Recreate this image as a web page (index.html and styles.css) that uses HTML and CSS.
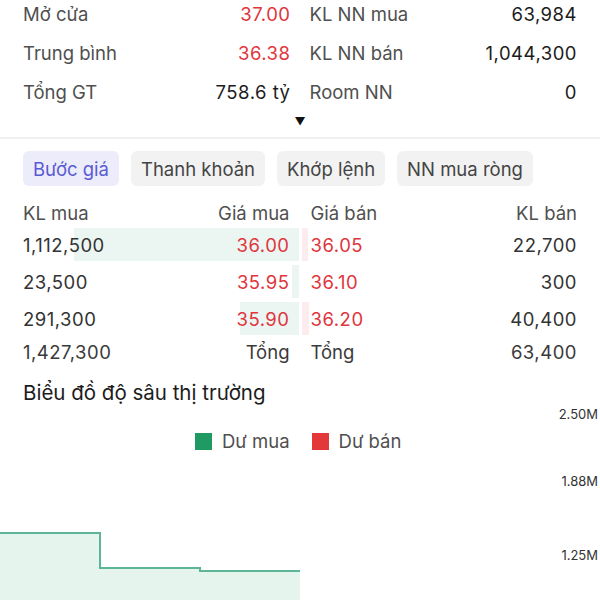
FILE: index.html
```html
<!DOCTYPE html>
<html lang="vi">
<head>
    <meta charset="UTF-8">
    <meta name="viewport" content="width=device-width, initial-scale=1.0">
    <title>Chi tiết cổ phiếu</title>
    <link rel="stylesheet" href="styles.css">
</head>
<body>
    <section class="stats">
        <div class="stat-row"><span class="label">Mở cửa</span><span class="value red">37.00</span></div>
        <div class="stat-row"><span class="label">KL NN mua</span><span class="value">63,984</span></div>
        <div class="stat-row"><span class="label">Trung bình</span><span class="value red">36.38</span></div>
        <div class="stat-row"><span class="label">KL NN bán</span><span class="value">1,044,300</span></div>
        <div class="stat-row"><span class="label">Tổng GT</span><span class="value">758.6 tỷ</span></div>
        <div class="stat-row"><span class="label">Room NN</span><span class="value">0</span></div>
    </section>
    <div class="expand">&#9660;</div>
    <hr class="divider">

    <nav class="tabs">
        <button class="tab active">Bước giá</button>
        <button class="tab">Thanh khoản</button>
        <button class="tab">Khớp lệnh</button>
        <button class="tab">NN mua ròng</button>
    </nav>

    <section class="book">
        <div class="book-row head">
            <div class="side buy"><span>KL mua</span><span>Giá mua</span></div>
            <div class="side sell"><span>Giá bán</span><span>KL bán</span></div>
        </div>
        <div class="book-row">
            <div class="side buy"><i class="bar" style="width: 81.5%"></i><span class="num">1,112,500</span><span class="num red">36.00</span></div>
            <div class="side sell"><i class="bar" style="width: 2.2%"></i><span class="num red">36.05</span><span class="num">22,700</span></div>
        </div>
        <div class="book-row">
            <div class="side buy"><i class="bar" style="width: 2.2%"></i><span class="num">23,500</span><span class="num red">35.95</span></div>
            <div class="side sell"><i class="bar" style="width: 0%"></i><span class="num red">36.10</span><span class="num">300</span></div>
        </div>
        <div class="book-row">
            <div class="side buy"><i class="bar" style="width: 21.3%"></i><span class="num">291,300</span><span class="num red">35.90</span></div>
            <div class="side sell"><i class="bar" style="width: 2.6%"></i><span class="num red">36.20</span><span class="num">40,400</span></div>
        </div>
        <div class="book-row total">
            <div class="side buy"><span class="num">1,427,300</span><span>Tổng</span></div>
            <div class="side sell"><span>Tổng</span><span class="num">63,400</span></div>
        </div>
    </section>

    <h2 class="chart-title">Biểu đồ độ sâu thị trường</h2>
    <div class="depth-chart">
        <svg class="plot" width="600" height="200" viewBox="0 0 600 200">
            <path d="M0 126 H100 V161 H200 V164 H300 V200 H0 Z" fill="#e6f4ee"/>
            <path d="M0 126 H100 V161 H200 V164 H300" fill="none" stroke="#5db597" stroke-width="2"/>
        </svg>
        <div class="legend">
            <span class="key"><i class="swatch green"></i>Dư mua</span>
            <span class="key"><i class="swatch redbox"></i>Dư bán</span>
        </div>
        <span class="tick" style="top: 7px">2.50M</span>
        <span class="tick" style="top: 74px">1.88M</span>
        <span class="tick" style="top: 148px">1.25M</span>
    </div>
</body>
</html>
```

FILE: styles.css
```css
body { margin: 0; padding: 0 23px; font-family: Inter, "Noto Sans", sans-serif; font-size: 18.5px; color: #1c1c1c; background: #fff; overflow: hidden; }
.red { color: #e0353d; }
.value, .num { letter-spacing: 0.5px; }

.stats { display: grid; grid-template-columns: 1fr 1fr; column-gap: 19px; margin-top: -6px; }
.stat-row { display: flex; justify-content: space-between; align-items: center; height: 39px; }
.label { color: #4f4f4f; }

.expand { text-align: center; font-size: 11px; line-height: 18px; margin-top: 1px; color: #111; }
.divider { border: none; border-top: 2px solid #f0f0f0; margin: 7px -23px 0; }

.tabs { display: flex; gap: 12px; margin-top: 12px; }
.tab { font: inherit; font-size: 18.5px; border: none; border-radius: 6px; background: #f2f2f2; color: #444; padding: 0 10px; height: 35px; }
.tab.active { background: #ececfb; color: #5a5ad4; }

.book { margin-top: 12px; color: #333; }
.book-row { display: grid; grid-template-columns: 1fr 1fr; gap: 3px; }
.book-row .side { position: relative; display: flex; justify-content: space-between; align-items: center; height: 33px; margin-bottom: 4px; }
.book-row .side span { position: relative; }
.side.buy { padding-right: 9px; }
.side.sell { padding-left: 9px; }
.book-row.head .side { height: 30px; margin-bottom: 0; color: #4f4f4f; }
.book-row.total .side { height: 26px; color: #3a3a3a; }
.bar { position: absolute; top: 0; bottom: 0; }
.buy .bar { right: 0; background: #ebf6f2; }
.sell .bar { left: 0; background: #fcecee; }

.chart-title { font-size: 20.5px; font-weight: 400; margin: 9px 0 0; line-height: 30px; color: #1c1c1c; }
.depth-chart { position: relative; height: 200px; margin: -1px -23px 0; }
.plot { position: absolute; left: 0; top: 0; }
.legend { position: absolute; top: 24px; left: 195px; display: flex; gap: 22px; color: #4f4f4f; }
.key { display: flex; align-items: center; gap: 10px; line-height: 20px; }
.swatch { width: 17px; height: 17px; display: inline-block; }
.swatch.green { background: #1f9a63; }
.swatch.redbox { background: #e2383a; }
.tick { position: absolute; right: 2px; font-size: 13px; line-height: 16px; color: #333; transform: translateY(-8px); }
```
